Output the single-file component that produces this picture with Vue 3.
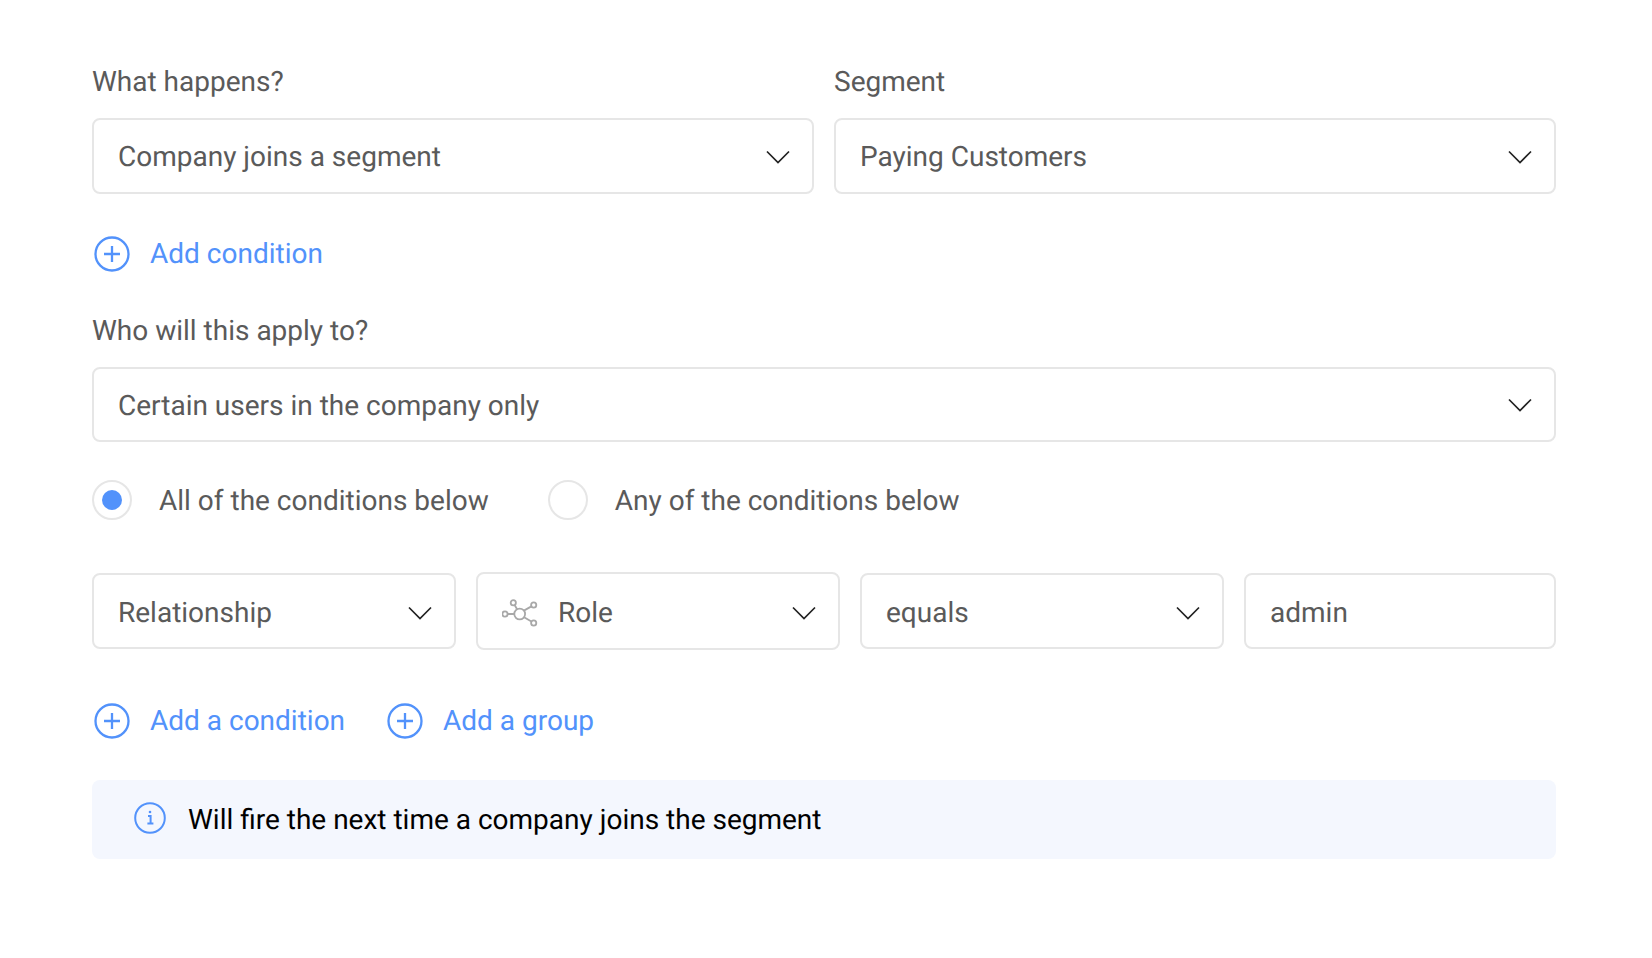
<template>
  <div class="page">
    <div class="two-col">
      <div class="field">
        <div class="label">What happens?</div>
        <div class="select">
          <span>Company joins a segment</span>
          <svg class="chevron" viewBox="0 0 24 14"><path d="M1 1.5l11 11 11-11" /></svg>
        </div>
      </div>
      <div class="field">
        <div class="label">Segment</div>
        <div class="select">
          <span>Paying Customers</span>
          <svg class="chevron" viewBox="0 0 24 14"><path d="M1 1.5l11 11 11-11" /></svg>
        </div>
      </div>
    </div>

    <div class="links first-link">
      <a class="add-link">
        <svg class="plus" viewBox="0 0 36 36"><circle cx="18" cy="18" r="16.5" /><path d="M18 10v16M10 18h16" /></svg>
        Add condition
      </a>
    </div>

    <div class="label who">Who will this apply to?</div>
    <div class="select wide">
      <span class="nudge">Certain users in the company only</span>
      <svg class="chevron flat" viewBox="0 0 24 14"><path d="M1 1.5l11 11 11-11" /></svg>
    </div>

    <div class="radios">
      <label class="radio">
        <span class="circle"><span class="dot"></span></span>
        All of the conditions below
      </label>
      <label class="radio">
        <span class="circle"></span>
        Any of the conditions below
      </label>
    </div>

    <div class="condition-row">
      <div class="select">
        <span>Relationship</span>
        <svg class="chevron" viewBox="0 0 24 14"><path d="M1 1.5l11 11 11-11" /></svg>
      </div>
      <div class="select tall">
        <span class="with-icon">
          <svg class="trait" viewBox="0 0 38 30">
            <circle cx="17.7" cy="15" r="5.4" />
            <circle cx="11.3" cy="3.7" r="2.6" />
            <circle cx="31.7" cy="6" r="2.6" />
            <circle cx="31.7" cy="24" r="2.6" />
            <circle cx="3" cy="15" r="2.6" />
            <path d="M5.6 15h6.7M12.6 6l2.5 4.3M29.4 7.4l-7.5 4.2M29.4 22.6l-7.3-4.4" />
          </svg>
          Role
        </span>
        <svg class="chevron" viewBox="0 0 24 14"><path d="M1 1.5l11 11 11-11" /></svg>
      </div>
      <div class="select">
        <span>equals</span>
        <svg class="chevron" viewBox="0 0 24 14"><path d="M1 1.5l11 11 11-11" /></svg>
      </div>
      <div class="select">
        <span>admin</span>
      </div>
    </div>

    <div class="links group-links">
      <a class="add-link">
        <svg class="plus" viewBox="0 0 36 36"><circle cx="18" cy="18" r="16.5" /><path d="M18 10v16M10 18h16" /></svg>
        Add a condition
      </a>
      <a class="add-link">
        <svg class="plus" viewBox="0 0 36 36"><circle cx="18" cy="18" r="16.5" /><path d="M18 10v16M10 18h16" /></svg>
        Add a group
      </a>
    </div>

    <div class="info">
      <svg class="info-icon" viewBox="0 0 32 32">
        <circle cx="16" cy="16" r="14.8" />
        <path d="M14 14h2.6v7M13.4 21.4h6" />
        <circle class="info-dot" cx="16" cy="10" r="1.3" />
      </svg>
      <span>Will fire the next time a company joins the segment</span>
    </div>
  </div>
</template>

<script setup>
</script>

<style>
html, body {
  background: #fff;
}
</style>

<style scoped>
.page {
  width: 1464px;
  margin-left: 92px;
  padding-top: 62px;
  font-family: Roboto, sans-serif;
  font-size: 28px;
  color: #5a5a5a;
  text-rendering: geometricPrecision;
}

.label {
  height: 40px;
  line-height: 40px;
  margin-bottom: 16px;
}

.two-col {
  display: grid;
  grid-template-columns: 1fr 1fr;
  gap: 20px;
}

.select {
  display: flex;
  align-items: center;
  justify-content: space-between;
  box-sizing: border-box;
  height: 76px;
  padding: 0 22px 0 24px;
  background: #fff;
  border: 2px solid #e6e6e6;
  border-radius: 8px;
}

.select.wide {
  height: 75px;
}

.select.tall {
  height: 78px;
}

.condition-row .select {
  padding-top: 2px;
}

.nudge {
  margin-top: 2px;
}

.chevron {
  flex: none;
  width: 24px;
  height: 14px;
  margin-top: 2px;
  fill: none;
  stroke: #222;
  stroke-width: 1.7;
}

.chevron.flat {
  margin-top: 0;
}

.links {
  display: flex;
  gap: 40px;
}

.first-link {
  margin-top: 41px;
}

.add-link {
  display: flex;
  align-items: center;
  gap: 20px;
  height: 36px;
  padding-left: 2px;
  color: #5292fb;
}

.plus {
  width: 36px;
  height: 36px;
  margin-top: 1px;
  fill: none;
  stroke: #5292fb;
  stroke-width: 2.3;
}

.who {
  margin-top: 40px;
  margin-bottom: 16px;
}

.radios {
  display: flex;
  gap: 59px;
  margin-top: 38px;
}

.radio {
  display: flex;
  align-items: center;
  gap: 27px;
}

.circle {
  display: flex;
  align-items: center;
  justify-content: center;
  box-sizing: border-box;
  width: 40px;
  height: 40px;
  border: 2px solid #e6e6e6;
  border-radius: 50%;
}

.dot {
  width: 20px;
  height: 20px;
  border-radius: 50%;
  background: #5292fb;
}

.condition-row {
  display: grid;
  grid-template-columns: 364px 364px 364px 1fr;
  align-items: center;
  gap: 20px;
  margin-top: 52px;
}

.with-icon {
  display: flex;
  align-items: center;
  gap: 18px;
}

.trait {
  width: 38px;
  height: 30px;
  margin-top: 4px;
  fill: none;
  stroke: #a8a8a8;
  stroke-width: 1.8;
}

.group-links {
  margin-top: 52px;
}

.info {
  display: flex;
  align-items: center;
  gap: 22px;
  height: 79px;
  margin-top: 42px;
  padding-left: 42px;
  background: #f4f7fe;
  border-radius: 8px;
  color: #000;
}

.info-icon {
  width: 32px;
  height: 32px;
  margin-top: -4px;
  fill: none;
  stroke: #5292fb;
  stroke-width: 2;
}

.info-dot {
  fill: #5292fb;
  stroke: none;
}
</style>
